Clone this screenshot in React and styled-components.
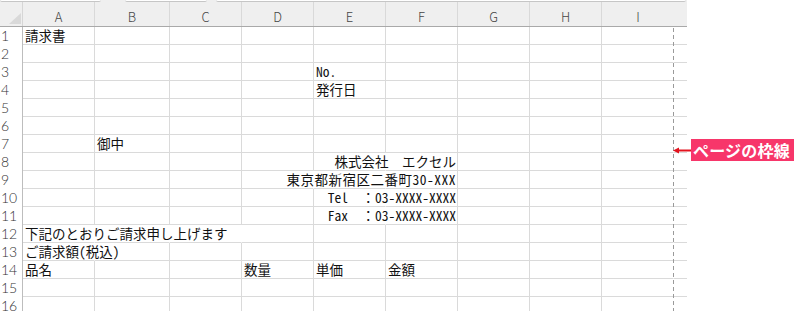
import React from 'react'
import styled, { createGlobalStyle } from 'styled-components'

const GlobalStyle = createGlobalStyle`
  html, body {
    margin: 0;
    padding: 0;
    background: #ffffff;
    overflow: hidden;
  }
`

const COLS = ['A', 'B', 'C', 'D', 'E', 'F', 'G', 'H', 'I']
const GRID = '23px 72px 75px repeat(7, 72px) 13px'
const CELL_FONT = `"Noto Sans Mono CJK JP", "Noto Sans CJK JP", monospace`
const UI_FONT = `"Noto Sans CJK JP", "Noto Sans", sans-serif`

// sheet content: text per cell, and which right gridlines are hidden by spilling text
const SHEET = {
  1: { cells: { A: '請求書' } },
  3: { cells: { E: 'No.' } },
  4: { cells: { E: '発行日' } },
  7: { cells: { B: '御中' } },
  8: { cells: { F: '株式会社　エクセル' }, right: ['F'], hide: ['E'] },
  9: { cells: { F: '東京都新宿区二番町30-XXX' }, right: ['F'], hide: ['D', 'E'], wide: true },
  10: { cells: { F: 'Tel　：03-XXXX-XXXX' }, right: ['F'], hide: ['E'] },
  11: { cells: { F: 'Fax　：03-XXXX-XXXX' }, right: ['F'], hide: ['E'] },
  12: { cells: { A: '下記のとおりご請求申し上げます' }, hide: ['A', 'B', 'C'] },
  13: { cells: { A: 'ご請求額(税込)' }, hide: ['A'] },
  14: { cells: { A: '品名', D: '数量', E: '単価', F: '金額' } },
}

const Page = styled.div`
  width: 795px;
  height: 311px;
  overflow: hidden;
  background: #ffffff;
`

const TopStrip = styled.div`
  width: 687px;
  height: 2px;
  display: flex;
  background: #efefef;
`

const Tab = styled.div`
  width: ${p => p.$w}px;
  margin-left: ${p => p.$ml || 0}px;
  height: 1px;
  background: #ffffff;
  border-bottom: 1px solid #c6c6c6;
  border-radius: 0 0 3px 3px;
`

const Sheet = styled.div`
  position: relative;
  width: 687px;
`

const HeaderRow = styled.div`
  display: grid;
  grid-template-columns: ${GRID};
  height: 25px;
  background: #efefef;
  border-bottom: 1px solid #a9a9a9;
  box-sizing: border-box;
`

const Corner = styled.div`
  border-right: 1px solid #d6d6d6;
  display: flex;
  align-items: flex-end;
  justify-content: flex-end;
  padding: 0 1px 2px 0;
`

const ColHead = styled.div`
  display: flex;
  align-items: center;
  justify-content: center;
  padding-top: 5px;
  font-family: ${UI_FONT};
  font-size: 13px;
  font-weight: 300;
  color: #444444;
  border-right: ${p => (p.$last ? 'none' : '1px solid #d9d9d9')};
`

const Row = styled.div`
  display: grid;
  grid-template-columns: ${GRID};
  height: 18px;
`

const RowHead = styled.div`
  border-right: 1px solid #bdbdbd;
  font-family: "Lato", ${UI_FONT};
  font-size: 14px;
  font-weight: 300;
  color: #333333;
  line-height: 18px;
  height: 18px;
  padding-left: 1px;
  white-space: nowrap;
  overflow: hidden;
`

const Cell = styled.div`
  box-sizing: border-box;
  border-bottom: 1px solid #dadada;
  border-right: ${p => (p.$hide ? '1px solid transparent' : '1px solid #dadada')};
  display: flex;
  align-items: flex-end;
  justify-content: ${p => (p.$right ? 'flex-end' : 'flex-start')};
  padding: ${p => (p.$right ? '0 1px 0 0' : '0 0 0 2px')};
  min-width: 0;
`

const Tail = styled.div`
  border-bottom: 1px solid #dadada;
`

const CellText = styled.span`
  font-family: ${CELL_FONT};
  font-size: 13.5px;
  line-height: 17px;
  letter-spacing: ${p => (p.$wide ? '0.5px' : '0')};
  color: #111111;
  white-space: nowrap;
  flex-shrink: 0;
`

const PageBreak = styled.div`
  position: absolute;
  left: 673px;
  top: 26px;
  width: 1px;
  height: 300px;
  background: repeating-linear-gradient(#9a9a9a 0 4px, transparent 4px 7px);
`

const Note = styled.div`
  position: absolute;
  left: 673px;
  top: 137px;
  display: flex;
  align-items: center;
`

const NoteLabel = styled.div`
  height: 22px;
  width: 103px;
  background: #f7366a;
  color: #ffffff;
  font-family: ${UI_FONT};
  font-weight: 700;
  font-size: 16px;
  line-height: 22px;
  letter-spacing: 0.2px;
  padding-left: 2px;
  box-sizing: border-box;
  white-space: nowrap;
`

const Arrow = () => (
  <svg width="18" height="22" viewBox="0 0 18 22">
    <line x1="4" y1="11.5" x2="18" y2="11.5" stroke="#e3131e" strokeWidth="2" />
    <polygon points="0,11.5 6,8.5 6,14.5" fill="#e3131e" />
  </svg>
)

const CornerMark = () => (
  <svg width="12" height="11" viewBox="0 0 12 11">
    <polygon points="12,0 12,11 0,11" fill="#d9d9d9" />
  </svg>
)

const App = () => {
  return (
    <Page>
      <GlobalStyle />
      <TopStrip>
        <Tab $w={101} />
        <Tab $w={82} $ml={24} />
        <Tab $w={470} $ml={9} />
      </TopStrip>
      <Sheet>
        <HeaderRow>
          <Corner>
            <CornerMark />
          </Corner>
          {COLS.map((c, i) => (
            <ColHead key={c} $last={i === COLS.length - 1}>{c}</ColHead>
          ))}
          <div />
        </HeaderRow>
        {Array.from({ length: 16 }, (_, i) => i + 1).map(n => {
          const row = SHEET[n] || { cells: {} }
          return (
            <Row key={n}>
              <RowHead>{n}</RowHead>
              {COLS.map(c => (
                <Cell
                  key={c}
                  $hide={(row.hide || []).includes(c) || c === 'I'}
                  $right={(row.right || []).includes(c)}
                >
                  {row.cells[c] && <CellText $wide={row.wide}>{row.cells[c]}</CellText>}
                </Cell>
              ))}
              <Tail />
            </Row>
          )
        })}
        <PageBreak />
        <Note>
          <Arrow />
          <NoteLabel>ページの枠線</NoteLabel>
        </Note>
      </Sheet>
    </Page>
  )
}

export default App
